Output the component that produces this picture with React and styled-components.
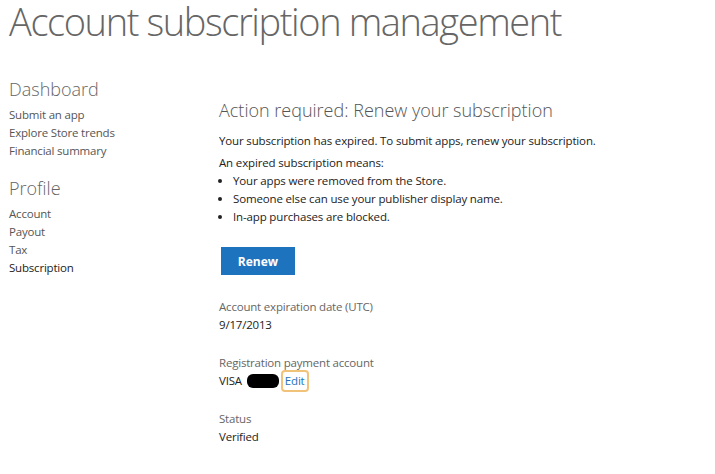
import React from 'react'
import styled, { createGlobalStyle } from 'styled-components'

const GlobalStyle = createGlobalStyle`
  body {
    margin: 0;
    background: #fff;
    font-family: "Open Sans", "Noto Sans", sans-serif;
    color: #222;
  }
`

const Page = styled.div`
  width: 715px;
  height: 474px;
  overflow: hidden;
`

const Title = styled.h1`
  margin: -2px 0 0;
  padding: 0 0 0 9px;
  font-size: 38px;
  font-weight: 300;
  line-height: 46px;
  color: #666;
  letter-spacing: -1.4px;
`

const Body = styled.div`
  display: grid;
  grid-template-columns: 219px 1fr;
  padding-top: 33px;
`

const Side = styled.nav`
  padding-left: 9px;
`

const SideHead = styled.h2`
  margin: 0 0 5px;
  font-size: 18px;
  font-weight: 300;
  line-height: 24px;
  color: #666;
`

const SideList = styled.ul`
  list-style: none;
  margin: 0 0 16px;
  padding: 0;
`

const SideItem = styled.li`
  font-size: 11.5px;
  line-height: 18px;
  color: ${p => (p.$active ? '#222' : '#555')};
  letter-spacing: -0.2px;
`

const Main = styled.main`
  padding-top: 21px;
`

const Heading = styled.h2`
  margin: 0 0 10px;
  font-size: 18px;
  font-weight: 300;
  line-height: 24px;
  color: #555;
`

const Text = styled.p`
  margin: 0 0 ${p => (p.$tight ? 0 : 4)}px;
  font-size: 11.5px;
  line-height: 18px;
  letter-spacing: -0.15px;
`

const Bullets = styled.ul`
  margin: 0;
  padding-left: 14px;
  font-size: 11.5px;
  line-height: 18px;
  letter-spacing: -0.15px;
`

const Button = styled.button`
  display: block;
  margin: 21px 0 0 2px;
  width: 74px;
  height: 28px;
  border: 0;
  background: #1e73be;
  color: #fff;
  font-family: inherit;
  font-size: 12px;
  font-weight: 700;
`

const Field = styled.div`
  margin-top: ${p => p.$gap || 20}px;
`

const Label = styled.div`
  font-size: 11.5px;
  line-height: 18px;
  color: #666;
  letter-spacing: -0.2px;
`

const Value = styled.div`
  font-size: 11.5px;
  line-height: 18px;
  color: #222;
  display: flex;
  align-items: center;
  letter-spacing: -0.2px;
`

const Redacted = styled.span`
  display: inline-block;
  width: 32px;
  height: 14px;
  margin: 0 4px 0 5px;
  background: #000;
  border-radius: 6px;
`

const EditLink = styled.a`
  color: #1e73be;
  text-decoration: none;
  padding: 0 2px;
  outline: 2px solid #f1c27a;
  border-radius: 2px;
`

export default function App() {
  return (
    <Page>
      <GlobalStyle />
      <Title>Account subscription management</Title>
      <Body>
        <Side>
          <SideHead>Dashboard</SideHead>
          <SideList>
            <SideItem>Submit an app</SideItem>
            <SideItem>Explore Store trends</SideItem>
            <SideItem>Financial summary</SideItem>
          </SideList>
          <SideHead>Profile</SideHead>
          <SideList>
            <SideItem>Account</SideItem>
            <SideItem>Payout</SideItem>
            <SideItem>Tax</SideItem>
            <SideItem $active>Subscription</SideItem>
          </SideList>
        </Side>
        <Main>
          <Heading>Action required: Renew your subscription</Heading>
          <Text>Your subscription has expired. To submit apps, renew your subscription.</Text>
          <Text $tight>An expired subscription means:</Text>
          <Bullets>
            <li>Your apps were removed from the Store.</li>
            <li>Someone else can use your publisher display name.</li>
            <li>In-app purchases are blocked.</li>
          </Bullets>
          <Button>Renew</Button>
          <Field $gap={23}>
            <Label>Account expiration date (UTC)</Label>
            <Value>9/17/2013</Value>
          </Field>
          <Field>
            <Label>Registration payment account</Label>
            <Value>
              VISA<Redacted />
              <EditLink href="#">Edit</EditLink>
            </Value>
          </Field>
          <Field>
            <Label>Status</Label>
            <Value>Verified</Value>
          </Field>
        </Main>
      </Body>
    </Page>
  )
}
